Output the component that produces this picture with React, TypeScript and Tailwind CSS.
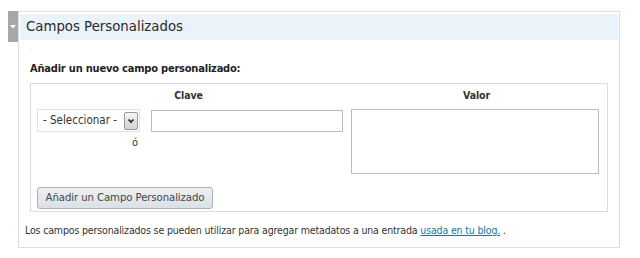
import React from 'react'

const font = { fontFamily: '"DejaVu Sans", Verdana, sans-serif' }
const cond = { fontFamily: '"DejaVu Sans Condensed", "DejaVu Sans", sans-serif' }

const SelectBox: React.FC = () => (
  <div
    className="flex h-[23px] w-[103px] items-center justify-between border border-[#e2e2e2] bg-white pl-[5px] pr-[1px] text-[11.5px] text-[#333]"
    style={cond}
  >
    <span>- Seleccionar -</span>
    <span className="flex h-[18px] w-[14px] items-center justify-center rounded-[2px] border border-[#9a9a9a] bg-gradient-to-b from-[#f4f4f4] to-[#cfd3d8]">
      <svg className="h-[8px] w-[8px]" viewBox="0 0 8 8" fill="none" stroke="#333" strokeWidth={1.8}>
        <path d="M1.5 2.5 4 5.2 6.5 2.5" />
      </svg>
    </span>
  </div>
)

const App: React.FC = () => {
  return (
    <div className="h-[258px] w-[640px] bg-white pl-[8px] pt-[11px]" style={font}>
      <div className="flex w-[612px]">
        <div className="flex h-[31px] w-[10px] items-center justify-center bg-[#a7a7a7]">
          <svg className="h-[4px] w-[6px]" viewBox="0 0 6 4" fill="#fff">
            <path d="M0 0h6L3 3.5z" />
          </svg>
        </div>
        <div className="flex h-[237px] flex-1 flex-col border border-[#dedede] bg-white">
          <div className="mx-[1px] mt-[2px] flex h-[26px] items-center bg-[#eaf2fa] pl-[6px] text-[13.3px] text-[#2a2a2a]">
            Campos Personalizados
          </div>
          <div className="flex flex-col pl-[11px] pr-[11px]" style={cond}>
            <div className="mt-[4px] h-[8px] text-[7px] leading-[8px] text-[#bbb]">.</div>
            <div className="mt-[10px] text-[11px] font-bold leading-[14px] tracking-[-0.2px] text-[#222]">
              Añadir un nuevo campo personalizado:
            </div>
            <div className="mt-[7px] flex h-[129px] w-[578px] flex-col border border-[#dcdcdc]">
              <div className="flex pt-[3px] text-[10.5px] font-bold leading-[16px] tracking-[-0.1px] text-[#333]">
                <div className="w-[315px] text-center">Clave</div>
                <div className="flex-1 text-center">Valor</div>
              </div>
              <div className="mt-[6px] flex">
                <div className="flex w-[315px] items-start pl-[6px]">
                  <div className="flex flex-col items-end">
                    <SelectBox />
                    <span className="mr-[2px] mt-[3px] text-[11px] leading-[16px] text-[#333]">ó</span>
                  </div>
                  <div className="ml-[11px] mt-[1px] h-[22px] w-[192px] border border-[#bdbdbd] bg-white" />
                </div>
                <div className="ml-[5px] h-[65px] w-[248px] border border-[#bdbdbd] bg-white" />
              </div>
              <div className="mt-[10px] pl-[6px]">
                <button className="h-[22px] w-[176px] whitespace-nowrap rounded-[3px] border border-[#a9b1b8] bg-gradient-to-b from-[#eef1f3] to-[#d9e0e6] text-[11.3px] tracking-[-0.1px] text-[#464646]">
                  Añadir un Campo Personalizado
                </button>
              </div>
            </div>
            <p className="ml-[-5px] mt-[10px] whitespace-nowrap text-[10.5px] leading-[16px] tracking-[-0.15px] text-[#333]">
              Los campos personalizados se pueden utilizar para agregar metadatos a una entrada{' '}
              <a className="text-[#21759b] underline">usada en tu blog.</a> .
            </p>
          </div>
        </div>
      </div>
    </div>
  )
}

export default App
